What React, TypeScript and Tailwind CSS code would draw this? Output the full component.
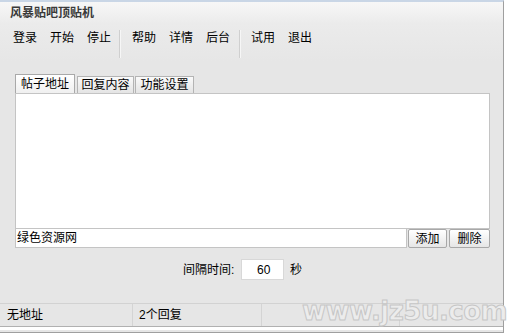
import React from 'react';

const font = "font-['Liberation_Sans','Noto_Sans_CJK_SC',sans-serif]";

function MenuItem({ label }: { label: string }) {
    return <span className="text-[12px] leading-[14px] text-black pt-[7px]">{label}</span>;
}

function Sep({ className }: { className: string }) {
    return <div className={`mt-[6px] h-[28px] w-[2px] border-l border-[#cfcfcf] bg-[#f6f6f6] ${className}`} />;
}

export default function App() {
    return (
        <div className={`w-[511px] h-[334px] bg-white overflow-hidden ${font}`}>
            <div className="relative w-[504px] h-[333px] flex flex-col bg-[#e6e6e6] border-t-2 border-t-[#c9d6e6] border-r border-b border-[#9f9f9f]">
                {/* title */}
                <div className="h-[22px] pl-[10px] flex items-center bg-gradient-to-b from-[#f7f7f7] to-[#ebebeb]">
                    <span className="text-[12px] font-bold text-[#3a3a3a]">风暴贴吧顶贴机</span>
                </div>

                {/* menu */}
                <div className="h-[38px] flex items-start pl-[13px] bg-gradient-to-b from-[#ebebeb] to-[#e6e6e6]">
                    <div className="flex gap-[13px]">
                        <MenuItem label="登录" />
                        <MenuItem label="开始" />
                        <MenuItem label="停止" />
                    </div>
                    <Sep className="ml-[8px] mr-[11px]" />
                    <div className="flex gap-[13px]">
                        <MenuItem label="帮助" />
                        <MenuItem label="详情" />
                        <MenuItem label="后台" />
                    </div>
                    <Sep className="ml-[9px] mr-[10px]" />
                    <div className="flex gap-[13px]">
                        <MenuItem label="试用" />
                        <MenuItem label="退出" />
                    </div>
                </div>

                {/* tabs */}
                <div className="mt-[12px] ml-[15px] flex items-end h-[19px]">
                    <div className="w-[60px] h-[19px] flex items-center justify-center border border-b-0 border-[#a9a9a9] bg-gradient-to-b from-white to-[#f0f0f0] text-[12px] text-black">帖子地址</div>
                    <div className="ml-[2px] w-[57px] h-[17px] flex items-center justify-center border border-b-0 border-[#b4b4b4] bg-gradient-to-b from-[#fafafa] to-[#e4e4e4] text-[12px] text-black">回复内容</div>
                    <div className="ml-[1px] w-[59px] h-[17px] flex items-center justify-center border border-b-0 border-[#b4b4b4] bg-gradient-to-b from-[#fafafa] to-[#e4e4e4] text-[12px] text-black">功能设置</div>
                </div>

                {/* list panel */}
                <div className="ml-[15px] w-[475px] h-[136px] bg-white border border-[#c4c4c4]" />

                {/* address input row */}
                <div className="ml-[15px] w-[475px] h-[19px] flex">
                    <div className="flex-1 h-[19px] bg-white border border-t-0 border-[#c4c4c4] flex items-center pl-[1px] text-[12px] text-black">绿色资源网</div>
                    <button className="ml-[1px] w-[39px] h-[19px] flex items-center justify-center border border-[#a8a8a8] rounded-[2px] bg-gradient-to-b from-white to-[#e6e6e6] text-[12px] text-black">添加</button>
                    <button className="ml-[2px] w-[41px] h-[19px] flex items-center justify-center border border-[#a8a8a8] rounded-[2px] bg-gradient-to-b from-white to-[#e6e6e6] text-[12px] text-black">删除</button>
                </div>

                {/* interval */}
                <div className="mt-[11px] pl-[183px] flex items-center h-[21px]">
                    <span className="text-[12px] text-black w-[58px]">间隔时间:</span>
                    <div className="w-[43px] h-[21px] bg-white border border-[#d8d8d8] flex items-center pl-[15px] text-[12px] text-black">60</div>
                    <span className="ml-[6px] text-[12px] text-black">秒</span>
                </div>

                {/* status bar */}
                <div className="mt-[23px] h-[24px] flex border-t border-[#d2d2d2] border-b border-b-[#b0b0b0] text-[12px] text-black">
                    <div className="w-[133px] pl-[7px] flex items-center border-r border-[#d4d4d4]">无地址</div>
                    <div className="w-[129px] pl-[6px] flex items-center border-r border-[#d4d4d4]">2个回复</div>
                    <div className="w-[138px] border-r border-[#d4d4d4]" />
                    <div className="flex-1" />
                </div>
                <div className="h-[3px] bg-white" />

                {/* watermark */}
                <div className="absolute left-[302px] top-[296px] text-[26px] leading-[26px] font-bold tracking-[-0.5px] text-[#ececec] [-webkit-text-stroke:1px_#c6c6c6] font-['DejaVu_Sans',sans-serif]">
                    www.jz5u.com
                </div>
            </div>
        </div>
    );
}
